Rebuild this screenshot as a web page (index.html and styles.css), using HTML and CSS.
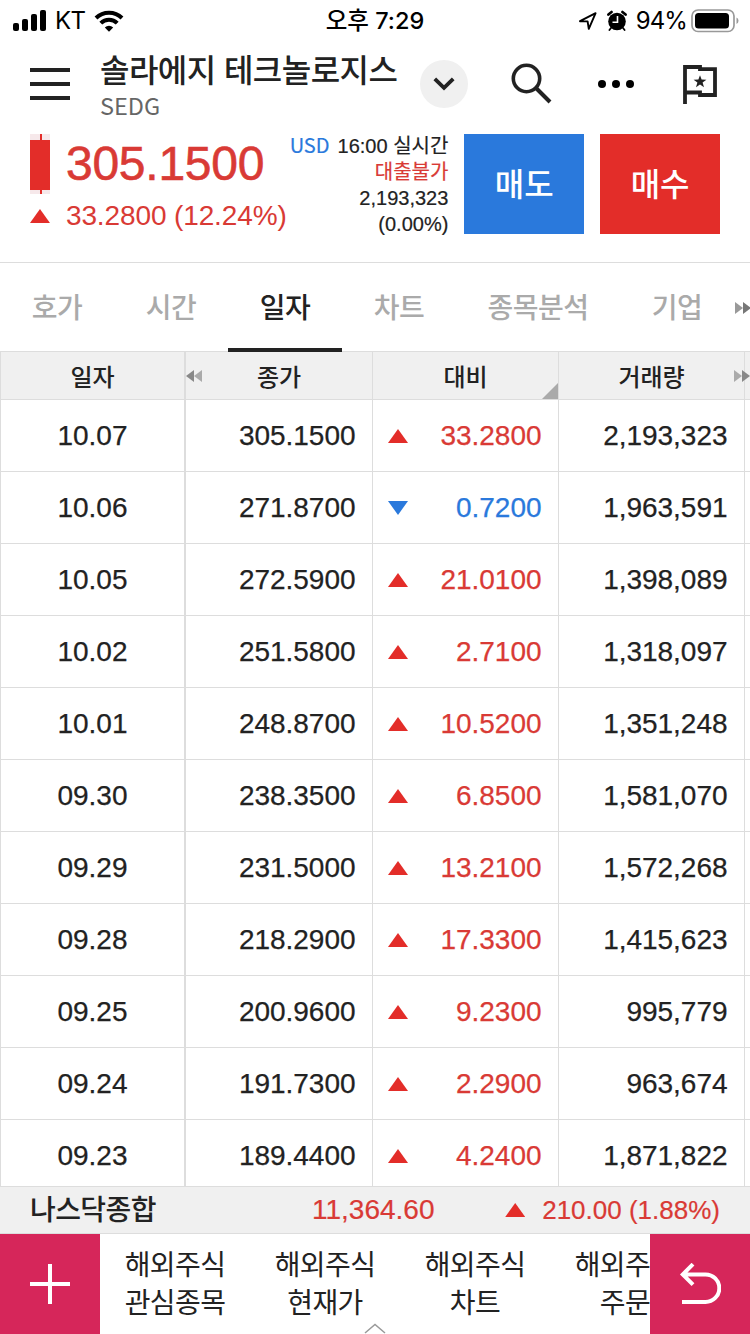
FILE: index.html
```
<!DOCTYPE html>
<html lang="ko">
<head>
    <meta charset="UTF-8">
    <meta name="viewport" content="width=device-width, initial-scale=1.0">
    <title>솔라에지 테크놀로지스</title>
    <link rel="stylesheet" href="styles.css">
</head>
<body>
<div class="app">
    <div class="status-bar">
        <div class="status-left">
            <svg width="34" height="22" viewBox="0 0 34 22">
                <rect x="0" y="13" width="6" height="8" rx="2"/>
                <rect x="9" y="9" width="6" height="12" rx="2"/>
                <rect x="18" y="4" width="6" height="17" rx="2"/>
                <rect x="27" y="0" width="6" height="21" rx="2"/>
            </svg>
            <span class="carrier">KT</span>
            <svg class="wifi" width="30" height="22" viewBox="0 0 30 22">
                <path d="M2 8 A18.5 18.5 0 0 1 28 8" fill="none" stroke="#000" stroke-width="4"/>
                <path d="M6.8 13.2 A11.5 11.5 0 0 1 23.2 13.2" fill="none" stroke="#000" stroke-width="4"/>
                <path d="M10.8 17.5 A6.2 6.2 0 0 1 19.2 17.5 L15 21.8 Z"/>
            </svg>
        </div>
        <div class="status-time">오후 7:29</div>
        <div class="status-right">
            <svg width="20" height="20" viewBox="0 0 20 20">
                <path d="M2 10.2 L17.6 2.2 L10.8 17.8 L9.6 10.4 Z" fill="none" stroke="#000" stroke-width="1.9" stroke-linejoin="round"/>
            </svg>
            <svg class="alarm" width="20" height="22" viewBox="0 0 20 22">
                <circle cx="10" cy="11.5" r="8.8"/>
                <path d="M1.4 4.6 L4.6 2 M18.6 4.6 L15.4 2" stroke="#000" stroke-width="2.6" stroke-linecap="round"/>
                <path d="M4 18 L2.4 20 M16 18 L17.6 20" stroke="#000" stroke-width="1.8" stroke-linecap="round"/>
                <path d="M10.5 6 V12.3 H5.5" fill="none" stroke="#fff" stroke-width="1.6"/>
            </svg>
            <span class="percent">94%</span>
            <svg width="48" height="24" viewBox="0 0 48 24">
                <rect x="1" y="1" width="42" height="21.5" rx="6" fill="none" stroke="#999" stroke-width="1.7"/>
                <rect x="4" y="4" width="34" height="15.5" rx="3.5"/>
                <path d="M45.5 8.5 Q47.5 9.5 47.5 11.8 Q47.5 14 45.5 15 Z" fill="#999"/>
            </svg>
        </div>
    </div>

    <div class="header">
        <svg class="menu" width="40" height="34" viewBox="0 0 40 34">
            <path d="M0 3 H40 M0 17 H40 M0 31 H40" stroke="#222" stroke-width="4"/>
        </svg>
        <div class="stock">
            <div class="stock-name">솔라에지 테크놀로지스</div>
            <div class="stock-code">SEDG</div>
        </div>
        <div class="dropdown">
            <svg width="22" height="14" viewBox="0 0 22 14">
                <path d="M1.8 1.8 L11 10.8 L20.2 1.8" fill="none" stroke="#222" stroke-width="3.8"/>
            </svg>
        </div>
        <svg class="search" width="42" height="42" viewBox="0 0 42 42">
            <circle cx="15.5" cy="15.5" r="13.2" fill="none" stroke="#222" stroke-width="3.6"/>
            <path d="M25 25 L39 39" stroke="#222" stroke-width="4"/>
        </svg>
        <svg class="more" width="38" height="10" viewBox="0 0 38 10">
            <circle cx="5" cy="5" r="4"/><circle cx="19" cy="5" r="4"/><circle cx="33" cy="5" r="4"/>
        </svg>
        <svg class="flag" width="34" height="40" viewBox="0 0 34 40">
            <path d="M2 40 V3 H17 V5.2 H32 V31 H17 V28.5 H2" fill="none" stroke="#222" stroke-width="3.8"/>
            <path d="M17 11.2 L18.6 15.6 L23.4 15.7 L19.6 18.6 L21 23.2 L17 20.5 L13 23.2 L14.4 18.6 L10.6 15.7 L15.4 15.6 Z" fill="#222"/>
        </svg>
    </div>

    <div class="quote">
        <div class="candle"></div>
        <div class="price">
            <div class="price-now">305.1500</div>
            <div class="price-change">33.2800 (12.24%)</div>
        </div>
        <div class="info">
            <div><span class="currency">USD</span>16:00 실시간</div>
            <div class="red">대출불가</div>
            <div>2,193,323</div>
            <div>(0.00%)</div>
        </div>
        <div class="order sell">매도</div>
        <div class="order buy">매수</div>
    </div>

    <div class="tabs">
        <div class="tab">호가</div>
        <div class="tab">시간</div>
        <div class="tab active">일자</div>
        <div class="tab">차트</div>
        <div class="tab wide">종목분석</div>
        <div class="tab">기업</div>
        <svg class="tabs-next" width="16" height="12" viewBox="0 0 16 12">
            <path d="M0 0 L8 6 L0 12 Z" fill="#999"/><path d="M8 0 L16 6 L8 12 Z" fill="#777"/>
        </svg>
    </div>

    <div class="table-wrap">
        <table class="prices">
            <thead>
            <tr>
                <th class="date">일자</th>
                <th class="close">종가
                    <svg class="scroll-left" width="16" height="12" viewBox="0 0 16 12">
                        <path d="M8 0 L0 6 L8 12 Z" fill="#888"/><path d="M16 0 L8 6 L16 12 Z" fill="#aaa"/>
                    </svg>
                </th>
                <th class="diff">대비<span class="corner"></span></th>
                <th class="volume">거래량
                    <svg class="scroll-right" width="16" height="12" viewBox="0 0 16 12">
                        <path d="M0 0 L8 6 L0 12 Z" fill="#aaa"/><path d="M8 0 L16 6 L8 12 Z" fill="#888"/>
                    </svg>
                </th>
                <th class="rest"></th>
            </tr>
            </thead>
            <tbody>
            <tr><td class="date">10.07</td><td>305.1500</td><td class="up">33.2800</td><td>2,193,323</td><td></td></tr>
            <tr><td class="date">10.06</td><td>271.8700</td><td class="down">0.7200</td><td>1,963,591</td><td></td></tr>
            <tr><td class="date">10.05</td><td>272.5900</td><td class="up">21.0100</td><td>1,398,089</td><td></td></tr>
            <tr><td class="date">10.02</td><td>251.5800</td><td class="up">2.7100</td><td>1,318,097</td><td></td></tr>
            <tr><td class="date">10.01</td><td>248.8700</td><td class="up">10.5200</td><td>1,351,248</td><td></td></tr>
            <tr><td class="date">09.30</td><td>238.3500</td><td class="up">6.8500</td><td>1,581,070</td><td></td></tr>
            <tr><td class="date">09.29</td><td>231.5000</td><td class="up">13.2100</td><td>1,572,268</td><td></td></tr>
            <tr><td class="date">09.28</td><td>218.2900</td><td class="up">17.3300</td><td>1,415,623</td><td></td></tr>
            <tr><td class="date">09.25</td><td>200.9600</td><td class="up">9.2300</td><td>995,779</td><td></td></tr>
            <tr><td class="date">09.24</td><td>191.7300</td><td class="up">2.2900</td><td>963,674</td><td></td></tr>
            <tr><td class="date">09.23</td><td>189.4400</td><td class="up">4.2400</td><td>1,871,822</td><td></td></tr>
            </tbody>
        </table>
    </div>

    <div class="index-bar">
        <div class="index-name">나스닥종합</div>
        <div class="index-value">11,364.60</div>
        <div class="index-change">210.00 (1.88%)</div>
    </div>

    <div class="bottom">
        <div class="square">
            <svg width="40" height="40" viewBox="0 0 40 40">
                <path d="M20 0 V40 M0 20 H40" stroke="#fff" stroke-width="4"/>
            </svg>
        </div>
        <div class="shortcuts">
            <div class="shortcut">해외주식<br>관심종목</div>
            <div class="shortcut">해외주식<br>현재가</div>
            <div class="shortcut">해외주식<br>차트</div>
            <div class="shortcut">해외주식<br>주문</div>
        </div>
        <div class="square">
            <svg class="back" width="42" height="42" viewBox="0 0 42 42">
                <path d="M3 39 H26.5 A13.8 13.8 0 0 0 26.5 11.4 H4 M14 1.2 L3.8 11.4 L14 21.6" fill="none" stroke="#fff" stroke-width="4"/>
            </svg>
        </div>
        <svg class="handle" width="22" height="11" viewBox="0 0 22 11">
            <path d="M1 10 L11 1.5 L21 10" fill="none" stroke="#999" stroke-width="1.5"/>
        </svg>
    </div>
</div>
</body>
</html>
```
FILE: styles.css
```
* { box-sizing: border-box; }
body { margin: 0; background: #fff; color: #222; font-family: "Liberation Sans", "Noto Sans CJK KR", sans-serif; }
svg { display: block; flex: none; }
.app { display: flex; flex-direction: column; width: 750px; height: 1334px; overflow: hidden; }
.red { color: #d93a35; }

/* status bar */
.status-bar { display: grid; grid-template-columns: 1fr auto 1fr; align-items: center; height: 40px; padding: 0 11px 0 13px; color: #000; font-family: Inter, "Noto Sans CJK KR", sans-serif; font-size: 24px; line-height: 42px; }
.status-left, .status-right { display: flex; align-items: center; }
.status-right { justify-content: flex-end; }
.carrier { margin-left: 8px; letter-spacing: -0.6px; }
.wifi { margin-left: 9px; }
.status-time { margin-right: 2px; font-weight: 500; font-size: 23.5px; }
.alarm { margin-left: 9px; }
.percent { margin: 0 4px 0 9px; letter-spacing: -0.9px; }

/* title */
.header { display: flex; align-items: center; height: 88px; padding: 0 33px 0 30px; }
.stock { width: 304px; margin-left: 30px; font-family: "Noto Sans CJK KR", sans-serif; white-space: nowrap; }
.stock-name { height: 43px; line-height: 38px; font-size: 32px; font-weight: 500; letter-spacing: -0.55px; }
.stock-code { height: 27px; line-height: 26px; font-size: 23.5px; color: #666; }
.dropdown { display: flex; justify-content: center; align-items: center; width: 48px; height: 48px; margin-left: 16px; border-radius: 50%; background: #f0f0f0; }
.search { margin-left: 43px; }
.more { margin-left: 44px; }
.flag { margin-left: 48px; }

/* current price */
.quote { display: flex; align-items: flex-start; height: 135px; padding: 6px 30px 0; border-bottom: 1px solid #ddd; }
.candle { width: 20px; height: 60px; background: linear-gradient(#e32d29, #e32d29) 10px 0 / 2px 60px no-repeat, linear-gradient(#e32d29, #e32d29) 0 6px / 20px 50px no-repeat, #f6e8ea; }
.price { width: 224px; margin-left: 16px; color: #d93a35; white-space: nowrap; }
.price-now { height: 60px; line-height: 60px; font-size: 48px; letter-spacing: -0.25px; -webkit-text-stroke: 0.6px #d93a35; }
.price-change { position: relative; height: 44px; line-height: 44px; font-size: 28px; letter-spacing: -0.12px; }
.price-change::before, .up::before, .down::before, .index-change::before { content: ""; position: absolute; width: 20px; height: 14px; background: #e32d29; clip-path: polygon(50% 0, 100% 100%, 0 100%); }
.price-change::before { left: -36px; top: 15px; }
.info { flex: 1; text-align: right; font-size: 20px; line-height: 24px; white-space: nowrap; -webkit-text-stroke: 0.2px; }
.info div { height: 26px; }
.currency { margin-right: 8px; color: #2a79dc; font-family: "Noto Sans CJK KR", sans-serif; line-height: 1; }
.order { width: 120px; height: 100px; margin-left: 16px; color: #fff; font-size: 32px; font-weight: 500; font-family: "Noto Sans CJK KR", sans-serif; line-height: 96px; text-align: center; }
.sell { background: #2a79dc; }
.buy { background: #e32d29; }

/* tabs */
.tabs { position: relative; display: flex; height: 89px; font-family: "Noto Sans CJK KR", sans-serif; font-size: 28px; font-weight: 500; line-height: 86px; letter-spacing: -0.5px; text-align: center; color: #aaa; }
.tab { width: 114px; height: 89px; }
.tab.wide { width: 164px; }
.tab.active { position: relative; z-index: 1; color: #222; border-bottom: 4px solid #222; }
.tabs-next { position: absolute; right: -1px; top: 39px; }

/* daily prices */
.table-wrap { height: 835px; margin-top: -1px; overflow: hidden; }
.prices { width: 750px; table-layout: fixed; border-collapse: separate; border-spacing: 0; font-size: 28px; }
.prices th { position: relative; height: 49px; padding: 0; border: 0 solid #ddd; border-width: 1px 1px 1px 0; background: #f0f0f0; font-family: "Noto Sans CJK KR", sans-serif; font-size: 24px; font-weight: 500; line-height: 42px; }
.prices th.date { padding: 0; }
.prices td { position: relative; height: 72px; padding: 0 16.5px 0 0; border: 0 solid #ddd; border-width: 0 1px 1px 0; text-align: right; line-height: 70px; letter-spacing: -0.03px; -webkit-text-stroke: 0.25px; }
.prices .date { width: 186px; padding: 0; border-left-width: 1px; border-right-width: 2px; text-align: center; }
.prices .close { width: 187px; }
.prices .diff, .prices .volume { width: 186px; }
.prices td:last-child, .prices .rest { padding: 0; border-right: 0; }
.up { color: #d93a35; }
.down { color: #2a79dc; }
.up::before, .down::before { left: 15px; top: 29px; }
.down::before { background: #2a79dc; clip-path: polygon(0 0, 100% 0, 50% 100%); }
.scroll-left { position: absolute; left: 0; top: 18px; }
.scroll-right { position: absolute; right: -6px; top: 18px; z-index: 1; }
.corner { position: absolute; right: 0; bottom: 0; width: 16px; height: 16px; background: #aaa; clip-path: polygon(100% 0, 100% 100%, 0 100%); }

/* index */
.index-bar { display: flex; height: 48px; padding: 0 30px; border: 1px solid #ddd; border-width: 1px 0; background: #f0f0f0; color: #d93a35; font-size: 26px; line-height: 46px; -webkit-text-stroke: 0.2px; }
.index-name { width: 282px; color: #222; font-family: "Noto Sans CJK KR", sans-serif; font-size: 28px; font-weight: 500; letter-spacing: -0.6px; line-height: 42px; -webkit-text-stroke: 0; }
.index-value { font-size: 28px; }
.index-change { position: relative; margin-left: auto; }
.index-change::before { left: -37px; top: 16px; }

/* bottom menu */
.bottom { position: relative; display: flex; height: 100px; }
.square { display: flex; flex: none; justify-content: center; align-items: center; width: 100px; height: 100px; background: #d6265a; }
.shortcuts { display: flex; width: 550px; overflow: hidden; }
.shortcut { flex: none; width: 150px; padding-top: 10px; font-family: "Noto Sans CJK KR", sans-serif; font-size: 28px; letter-spacing: -0.6px; line-height: 38px; text-align: center; }
.handle { position: absolute; left: 364px; bottom: 0; }
```
